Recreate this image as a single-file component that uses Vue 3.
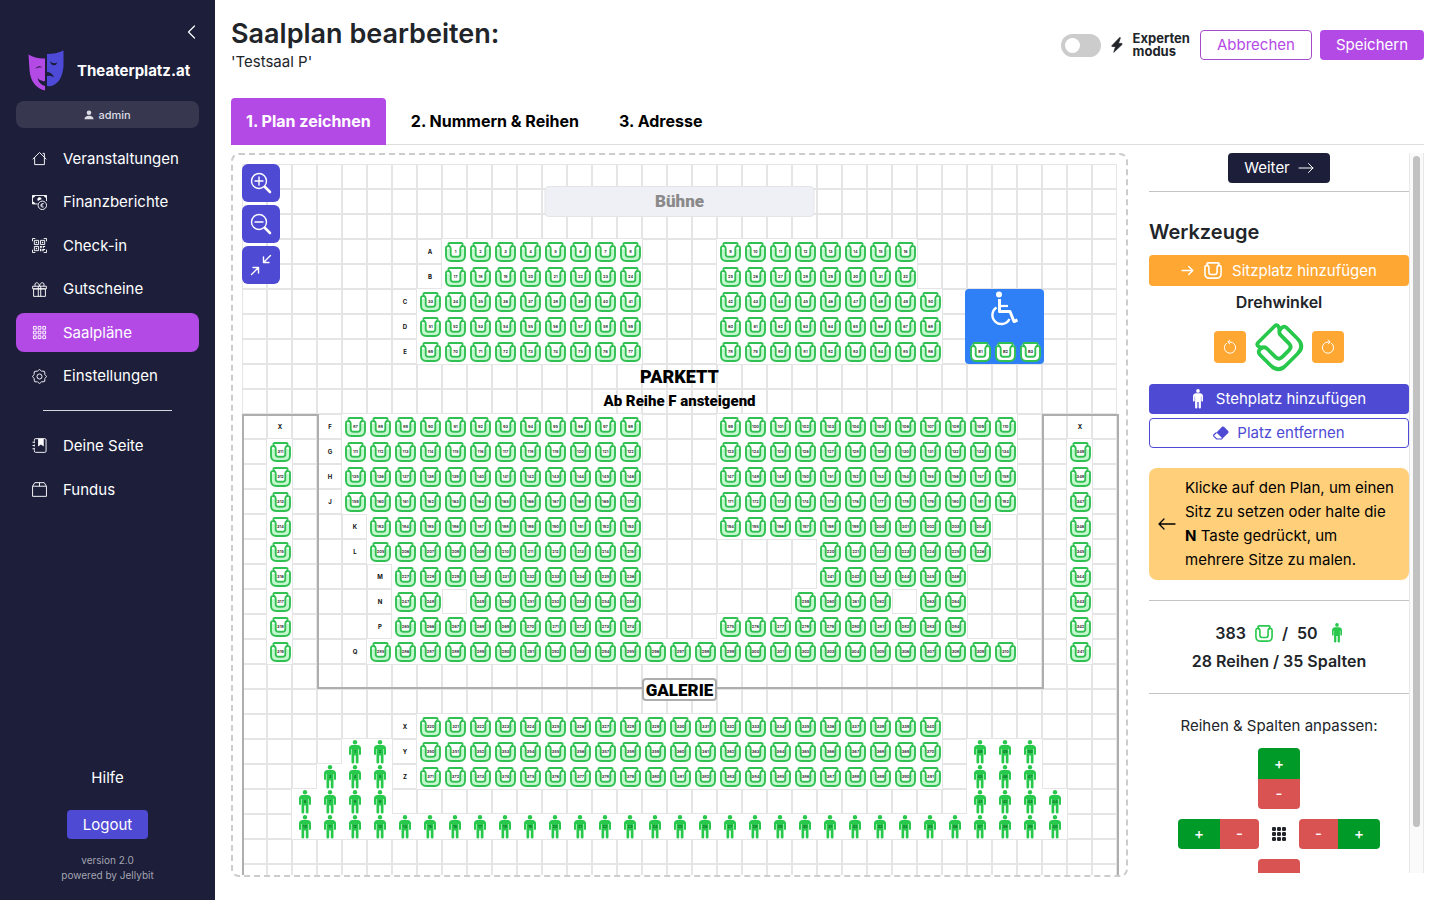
<script setup>
import { ref } from 'vue'

const expert = ref(false)
const tab = ref(0)
const tabs = ['1. Plan zeichnen', '2. Nummern & Reihen', '3. Adresse']

const mainNav = [
  { label: 'Veranstaltungen', icon: 'house' },
  { label: 'Finanzberichte', icon: 'cash' },
  { label: 'Check-in', icon: 'qr' },
  { label: 'Gutscheine', icon: 'gift' },
  { label: 'Saalpläne', icon: 'grid', active: true },
  { label: 'Einstellungen', icon: 'gear' },
]
const extraNav = [
  { label: 'Deine Seite', icon: 'journal' },
  { label: 'Fundus', icon: 'box' },
]

const CELL = 25
const COLS = 35
const ROWS = 29

// [row, first column, count, first number]
const seatRuns = [
  [3, 8, 8, 1], [3, 19, 8, 9],
  [4, 8, 8, 17], [4, 19, 8, 25],
  [5, 7, 9, 33], [5, 19, 9, 42],
  [6, 7, 9, 51], [6, 19, 9, 60],
  [7, 7, 9, 69], [7, 19, 9, 78],
  [10, 4, 12, 87], [10, 19, 12, 99],
  [11, 4, 12, 111], [11, 19, 12, 123],
  [12, 4, 12, 135], [12, 19, 12, 147],
  [13, 4, 12, 159], [13, 19, 12, 171],
  [14, 5, 11, 183], [14, 19, 11, 194],
  [15, 5, 11, 205], [15, 23, 7, 220],
  [16, 6, 10, 227], [16, 23, 6, 241],
  [17, 6, 2, 247], [17, 9, 7, 249], [17, 22, 4, 259], [17, 27, 2, 263],
  [18, 6, 10, 265], [18, 19, 10, 275],
  [19, 5, 26, 285],
  [22, 7, 21, 320],
  [23, 7, 21, 350],
  [24, 7, 21, 371],
]
const standRuns = [
  [23, 4, 2, 1], [24, 3, 3, 3], [25, 2, 4, 6], [26, 2, 31, 10],
  [25, 29, 4, 41], [24, 29, 3, 45], [23, 29, 3, 48],
]
const expand = (runs) =>
  runs.flatMap(([row, col, count, first]) =>
    Array.from({ length: count }, (_, i) => ({ row, col: col + i, n: String(first + i) })))

const seats = expand(seatRuns)
for (let i = 0; i < 9; i++) {
  seats.push({ row: 11 + i, col: 1, n: String(311 + i) })
  seats.push({ row: 11 + i, col: 33, n: String(349 - i) })
}
const wheelSeats = ['B1', 'B2', 'B3'].map((n, i) => ({ row: 7, col: 29 + i, n }))
const stands = expand(standRuns)

const rowLabels = [
  [3, 7, 'A'], [4, 7, 'B'], [5, 6, 'C'], [6, 6, 'D'], [7, 6, 'E'],
  [10, 3, 'F'], [11, 3, 'G'], [12, 3, 'H'], [13, 3, 'J'],
  [14, 4, 'K'], [15, 4, 'L'], [16, 5, 'M'], [17, 5, 'N'], [18, 5, 'P'], [19, 4, 'Q'],
  [22, 6, 'X'], [23, 6, 'Y'], [24, 6, 'Z'], [10, 1, 'X'], [10, 33, 'X'],
]

const taken = new Set([...seats, ...stands].map((s) => s.row + '-' + s.col))
const cells = []
for (let r = 0; r < ROWS; r++)
  for (let c = 0; c < COLS; c++)
    if (!taken.has(r + '-' + c)) cells.push({ r, c })
</script>

<template>
  <svg class="defs" aria-hidden="true">
    <symbol id="seat" viewBox="0 0 21 20">
      <g fill="none" stroke="currentColor" stroke-width="1.9" stroke-linejoin="round" stroke-linecap="round">
        <path d="M4.200 4.200 3.500 2.800Q3.100 1 4.900 1H16.100Q17.900 1 17.500 2.800L16.800 4.200" />
        <path d="M4.200 4.200Q1 3.600 1 6.200V13.500Q1 19 6.500 19H14.500Q20 19 20 13.500V6.200Q20 3.600 16.800 4.200" />
        <path d="M4.200 4.200Q5.700 4.800 5.700 6.600V12.200Q5.700 14.700 8.200 14.700H12.800Q15.300 14.700 15.300 12.200V6.600Q15.300 4.800 16.800 4.200" />
      </g>
    </symbol>
    <symbol id="person" viewBox="0 0 12 24">
      <circle cx="6" cy="2.3" r="2.2" />
      <path d="M3 5H9Q12 5.500 12 8.500V14Q12 15 11 15Q10 15 10 14V9H9.500V22.500Q9.500 23.500 8.300 23.500Q6.800 23.500 6.800 22.500V15.500H5.200V22.500Q5.200 23.500 3.700 23.500Q2.500 23.500 2.500 22.500V9H2V14Q2 15 1 15Q0 15 0 14V8.500Q0 5.500 3 5Z" />
    </symbol>
    <symbol id="house" viewBox="0 0 16 16">
      <path d="M1 8.500 8 1.600 15 8.500M2.800 7V14.500H13.200V7M11.800 2.500H13.200V6" fill="none" stroke="currentColor" stroke-linejoin="round" stroke-linecap="round" />
    </symbol>
    <symbol id="cash" viewBox="0 0 16 16">
      <path d="M6 9.500H.5V.5H15.500V6.500" fill="none" stroke="currentColor" />
      <path d="M.5.500H3.500Q3 3 .5 3.300ZM15.500.500H12.500Q13 3 15.500 3.300ZM.5 9.500V6.800Q3 7 3.300 9.500Z" fill="currentColor" />
      <path d="M10.300 4.600A2.300 2.300 0 1 0 6.500 6.500L8 5.400Z" fill="currentColor" />
      <circle cx="11" cy="11" r="4.500" fill="none" stroke="currentColor" />
      <path d="M12.600 9.200Q10 8 9.800 11Q10 14 12.600 12.800M9 10.400H11.500M9 11.700H11.500" fill="none" stroke="currentColor" stroke-width=".8" />
    </symbol>
    <symbol id="qr" viewBox="0 0 16 16">
      <path d="M.5 3.500V.5H3.500M12.500.5H15.500V3.500M15.500 12.500V15.500H12.500M3.500 15.500H.5V12.500M2.500 2.500H7V7H2.500ZM9 2.500H13.500V7H9ZM2.500 9H7V13.500H2.500Z" fill="none" stroke="currentColor" />
      <path d="M4 4H5.500V5.500H4ZM10.500 4H12V5.500H10.500ZM4 10.500H5.500V12H4ZM8.500 8.500H10.500V10.500H8.500ZM11.500 8.500H14V9.500H12.500V11H11.500ZM8.500 11.500H10V14H8.500ZM11 11.800H14V12.800H12.500V14H11Z" fill="currentColor" />
    </symbol>
    <symbol id="gift" viewBox="0 0 16 16">
      <path d="M.7 4.500H15.300V7.300H.7ZM1.700 7.300H14.300V15.300H1.700ZM6.700 4.500V15.300M9.300 4.500V15.300M8 4.500C7.500 2 6.500.800 5 .8C3 .8 2.800 3 3.500 4.500M8 4.500C8.500 2 9.500.800 11 .8C13 .8 13.200 3 12.500 4.500" fill="none" stroke="currentColor" />
    </symbol>
    <symbol id="grid" viewBox="0 0 16 16">
      <path d="M1.500 1.500H4.500V4.500H1.500ZM6.500 1.500H9.500V4.500H6.500ZM11.500 1.500H14.500V4.500H11.500ZM1.500 6.500H4.500V9.500H1.500ZM6.500 6.500H9.500V9.500H6.500ZM11.500 6.500H14.500V9.500H11.500ZM1.500 11.500H4.500V14.500H1.500ZM6.500 11.500H9.500V14.500H6.500ZM11.500 11.500H14.500V14.500H11.500Z" fill="none" stroke="currentColor" />
    </symbol>
    <symbol id="gear" viewBox="0 0 16 16">
      <circle cx="8" cy="8" r="2.700" fill="none" stroke="currentColor" />
      <path d="M6.600 1.600Q8-.4 9.400 1.600Q10 2.900 11.300 2.300Q13.700 1.600 13.700 4.200Q13.200 6 14.400 6.600Q16.400 8 14.400 9.400Q13.100 10 13.700 11.300Q14.400 13.700 11.800 13.700Q10 13.200 9.400 14.400Q8 16.400 6.600 14.400Q6 13.100 4.700 13.700Q2.300 14.400 2.300 11.800Q2.800 10 1.600 9.400Q-.4 8 1.600 6.600Q2.900 6 2.300 4.700Q1.600 2.300 4.200 2.300Q6 2.800 6.600 1.600Z" fill="none" stroke="currentColor" />
    </symbol>
    <symbol id="journal" viewBox="0 0 16 16">
      <path d="M2.500 3V2Q2.500.7 3.800.7H13.700Q15 .7 15 2V14Q15 15.300 13.700 15.300H3.800Q2.500 15.300 2.500 14V13M.5 4.500H2.500M.5 8H2.500M.5 11.500H2.500M2.500 3.500V5.500M2.500 7V9M2.500 10.500V12.500" fill="none" stroke="currentColor" />
      <path d="M6.500.7H12.500V9L9.500 7 6.500 9Z" fill="currentColor" />
    </symbol>
    <symbol id="box" viewBox="0 0 16 16">
      <path d="M.6 4.500 3 .7H13L15.400 4.500V15.300H.6ZM.6 4.500H15.400M8 .7V4.500" fill="none" stroke="currentColor" />
    </symbol>
    <symbol id="arrow" viewBox="0 0 16 16">
      <path d="M1 8H15M10.500 3.500 15 8 10.500 12.500" fill="none" stroke="currentColor" stroke-linecap="round" stroke-linejoin="round" />
    </symbol>
  </svg>

  <div class="app">
    <aside class="sidebar">
      <button class="collapse" aria-label="Menü einklappen">
        <svg width="16" height="16" viewBox="0 0 16 16"><path d="M11.500 2 5.500 8 11.500 14" fill="none" stroke="currentColor" stroke-width="1.200" stroke-linecap="round" stroke-linejoin="round" /></svg>
      </button>
      <a class="brand" href="#">
        <svg width="36" height="41" viewBox="0 0 36 41" aria-hidden="true">
          <path d="M.5 4.500Q8 9 17 8.500V40.500Q3 37 1.500 20Z" fill="#b44ae6" />
          <path d="M19 4Q28 4 35.500.5V16Q34 34 22 36.200L19 36Z" fill="#4e4ad8" />
          <path d="M7 19Q10 14.500 14.500 17.500Q10 16.500 7 19ZM9.500 28Q13 32 17 31V36Q11 34.500 9.500 28ZM22 11Q25 14.500 29.500 12.500Q28 16 24.500 15Q22.500 14 22 11ZM19 22Q24 22 26 27.500Q23 24.800 19 26Z" fill="#1c1e3a" />
        </svg>
        <span>Theaterplatz.at</span>
      </a>
      <button class="user">
        <svg width="10" height="10" viewBox="0 0 10 10" aria-hidden="true"><circle cx="5" cy="2.800" r="2.300" fill="currentColor" /><path d="M.5 9.300Q.5 5.800 5 5.800T9.500 9.300Z" fill="currentColor" /></svg>
        admin
      </button>
      <nav class="nav main-nav">
        <a v-for="item in mainNav" :key="item.label" href="#" :class="{ active: item.active }">
          <svg width="15" height="15" aria-hidden="true"><use :href="'#' + item.icon" /></svg>{{ item.label }}
        </a>
      </nav>
      <hr />
      <nav class="nav">
        <a v-for="item in extraNav" :key="item.label" href="#">
          <svg width="15" height="15" aria-hidden="true"><use :href="'#' + item.icon" /></svg>{{ item.label }}
        </a>
      </nav>
      <div class="foot">
        <a href="#" class="help">Hilfe</a>
        <button class="btn indigo">Logout</button>
        <p>version 2.0<br />powered by Jellybit</p>
      </div>
    </aside>

    <main>
      <header>
        <div>
          <h1>Saalplan bearbeiten:</h1>
          <p>'Testsaal P'</p>
        </div>
        <div class="actions">
          <label class="expert">
            <input v-model="expert" type="checkbox" role="switch" />
            <svg width="12" height="16" viewBox="0 0 12 16" aria-hidden="true"><path d="M8.800.5 1 8.600Q.4 9.400 1.300 9.500H4.600L2.800 15.300 11 7.500Q11.500 6.500 10.600 6.400H7.400L9.300 1Q9.200.3 8.800.5Z" fill="currentColor" stroke="currentColor" stroke-width=".8" /></svg>
            <span>Experten<br />modus</span>
          </label>
          <button class="btn outline-purple">Abbrechen</button>
          <button class="btn purple">Speichern</button>
        </div>
      </header>

      <div class="tabs" role="tablist">
        <button v-for="(t, i) in tabs" :key="t" role="tab" :aria-selected="tab === i" @click="tab = i">{{ t }}</button>
      </div>

      <div class="work">
        <section class="plan">
          <div class="zoom">
            <button aria-label="Vergrößern"><svg width="22" height="22" viewBox="0 0 22 22"><g fill="none" stroke="currentColor" stroke-linecap="round"><circle cx="9" cy="9" r="7.500" stroke-width="1.400" /><path d="M9 5V13M5 9H13" stroke-width="1.400" /><path d="M15 15 20 20" stroke-width="2.600" /></g></svg></button>
            <button aria-label="Verkleinern"><svg width="22" height="22" viewBox="0 0 22 22"><g fill="none" stroke="currentColor" stroke-linecap="round"><circle cx="9" cy="9" r="7.500" stroke-width="1.400" /><path d="M5 9H13" stroke-width="1.400" /><path d="M15 15 20 20" stroke-width="2.600" /></g></svg></button>
            <button aria-label="Einpassen"><svg width="22" height="22" viewBox="0 0 22 22"><path d="M20.500 1.500 13.500 8.500M13.500 3V8.500H19M1.500 20.500 8.500 13.500M3 13.500H8.500V19" fill="none" stroke="currentColor" stroke-width="1.400" stroke-linecap="round" stroke-linejoin="round" /></svg></button>
          </div>
          <div class="canvas">
            <svg width="877" height="725" viewBox="0 0 877 725">
              <g class="cells">
                <rect v-for="k in cells" :key="k.r + '-' + k.c" :x="k.c * CELL + 0.5" :y="k.r * CELL + 0.5" width="24" height="24" />
              </g>
              <g class="walls">
                <path d="M1 725V251H76V524H801V251H876V725" />
              </g>
              <g class="labels">
                <text v-for="l in rowLabels" :key="l[0] + '-' + l[1]" :x="l[1] * CELL + 13" :y="l[0] * CELL + 15">{{ l[2] }}</text>
              </g>
              <rect x="723" y="125" width="79" height="75" rx="4" fill="#2f80f7" />
              <g fill="none" stroke="#fff" stroke-width="3" stroke-linejoin="round">
                <circle cx="757" cy="130.500" r="3" fill="#fff" stroke="none" />
                <path d="M757.500 135V147.500H768L772 157.500 775.500 156" />
                <path d="M758 142H766" stroke-width="2.200" />
                <path d="M754.500 143.500A9 9 0 1 0 767.500 155" stroke-width="2.400" />
              </g>
              <g v-for="s in wheelSeats" :key="s.n" class="seat">
                <rect :x="s.col * CELL + 4" :y="s.row * CELL + 4" width="19" height="18" rx="5" fill="#fff" />
                <use href="#seat" :x="s.col * CELL + 3" :y="s.row * CELL + 3" width="21" height="20" />
                <text :x="s.col * CELL + 13.5" :y="s.row * CELL + 14">{{ s.n }}</text>
              </g>
              <g v-for="s in seats" :key="s.n" class="seat">
                <path :transform="`translate(${s.col * CELL + 3} ${s.row * CELL + 3})`" class="glow" d="M3.300 7V13Q3.300 17 7 17H14Q17.700 17 17.700 13V7" />
                <use href="#seat" :x="s.col * CELL + 3" :y="s.row * CELL + 3" width="21" height="20" />
                <text :x="s.col * CELL + 13.5" :y="s.row * CELL + 14">{{ s.n }}</text>
              </g>
              <g v-for="s in stands" :key="'p' + s.n" class="stand">
                <use href="#person" :x="s.col * CELL + 7" :y="s.row * CELL + 1" width="12" height="24" />
                <text :x="s.col * CELL + 13" :y="s.row * CELL + 14">{{ s.n }}</text>
              </g>
              <rect x="303" y="22.500" width="269" height="30" rx="4" fill="#eff0f5" stroke="#e5e5e8" />
              <g class="titles">
                <text x="437.500" y="43" font-size="17" fill="#8a8a8a">Bühne</text>
                <text x="437.500" y="219" font-size="18">PARKETT</text>
                <text x="437.500" y="242" font-size="15">Ab Reihe F ansteigend</text>
                <rect x="401" y="515" width="73" height="21" rx="3" fill="#fff" stroke="#aeaeae" stroke-width="2" />
                <text x="437.500" y="532" font-size="17">GALERIE</text>
              </g>
            </svg>
          </div>
        </section>

        <aside class="tools">
          <div class="tools-body">
            <button class="btn dark next">Weiter <svg width="16" height="16" aria-hidden="true"><use href="#arrow" /></svg></button>
            <hr class="first" />
            <h2>Werkzeuge</h2>
            <button class="btn orange wide seat-add">
              <svg width="13" height="13" viewBox="0 0 16 16" aria-hidden="true"><path d="M1.500 8H14.500M9.500 3 14.500 8 9.500 13" fill="none" stroke="currentColor" stroke-width="1.800" stroke-linecap="round" stroke-linejoin="round" /></svg>
              <svg width="18" height="17" aria-hidden="true"><use href="#seat" /></svg>
              Sitzplatz hinzufügen
            </button>
            <div class="angle-title">Drehwinkel</div>
            <div class="angle">
              <button class="btn orange" aria-label="Nach links drehen"><svg width="16" height="16" viewBox="0 0 16 16"><path d="M4.800 4A5.600 5.600 0 1 0 8 3H6M8 .8 5.800 3 8 5.200" fill="none" stroke="currentColor" /></svg></button>
              <svg class="turned" width="42" height="40" aria-hidden="true"><use href="#seat" /></svg>
              <button class="btn orange" aria-label="Nach rechts drehen"><svg width="16" height="16" viewBox="0 0 16 16"><path d="M11.200 4A5.600 5.600 0 1 1 8 3H10M8 .8 10.200 3 8 5.200" fill="none" stroke="currentColor" /></svg></button>
            </div>
            <button class="btn indigo wide stand-add"><svg width="12" height="20" aria-hidden="true" fill="currentColor"><use href="#person" /></svg>Stehplatz hinzufügen</button>
            <button class="btn outline-indigo wide remove"><svg width="16" height="14" viewBox="0 0 16 14" aria-hidden="true"><path d="M9 .8Q10 0 11 .8L15.200 5Q16 6 15.200 7L9.500 12.500 3.500 6.500Z" fill="currentColor" /><path d="M3.500 6.500 1 8.700Q.3 9.500 1 10.300L3.700 13H8.500L9.500 12.200" fill="none" stroke="currentColor" stroke-width="1.200" /></svg>Platz entfernen</button>
            <div class="hint">
              <svg width="20" height="20" viewBox="0 0 20 20" aria-hidden="true"><path d="M18 10H2M7 5 2 10 7 15" fill="none" stroke="currentColor" stroke-width="1.300" stroke-linecap="round" stroke-linejoin="round" /></svg>
              <p>Klicke auf den Plan, um einen Sitz zu setzen oder halte die <b>N</b> Taste gedrückt, um mehrere Sitze zu malen.</p>
            </div>
            <hr />
            <div class="stats">
              <div>383 <svg class="green" width="18" height="17" aria-hidden="true"><use href="#seat" /></svg> / <span>50</span> <svg class="green" width="12" height="20" fill="currentColor" aria-hidden="true"><use href="#person" /></svg></div>
              <div>28 Reihen / 35 Spalten</div>
            </div>
            <hr />
            <div class="adjust">
              <p>Reihen &amp; Spalten anpassen:</p>
              <div class="pair column"><button class="plus">+</button><button class="minus">-</button></div>
              <div class="middle">
                <div class="pair"><button class="plus">+</button><button class="minus">-</button></div>
                <svg width="16" height="16" viewBox="0 0 16 16" aria-hidden="true"><g fill="currentColor"><rect v-for="i in 9" :key="i" :x="1 + ((i - 1) % 3) * 5" :y="1 + Math.floor((i - 1) / 3) * 5" width="4" height="4" rx="1.300" /></g></svg>
                <div class="pair"><button class="minus">-</button><button class="plus">+</button></div>
              </div>
              <div class="pair column"><button class="minus">-</button><button class="plus">+</button></div>
            </div>
          </div>
          <div class="track"><div class="thumb"></div></div>
        </aside>
      </div>
    </main>
  </div>
</template>

<style>
body { background: #fff; }
</style>

<style scoped>
* { box-sizing: border-box; }
.defs { position: absolute; width: 0; height: 0; }
.app { display: flex; height: 100vh; font: 16px/24px Inter, "Liberation Sans", sans-serif; color: #212529; overflow: hidden; }
button { font: inherit; color: inherit; border: 0; background: none; padding: 0; cursor: pointer; }
a { color: inherit; text-decoration: none; }
p, h1, h2 { margin: 0; }
svg { flex: none; }

.sidebar { width: 215px; flex: none; background: #1c1e3a; color: #fff; padding: 24px 16px 17px; display: flex; flex-direction: column; font-weight: 400; font-size: 15px; }
.collapse { align-self: flex-end; height: 16px; display: flex; }
.brand { display: flex; align-items: center; gap: 13px; padding-left: 12px; margin: 10px 0; font-weight: 700; white-space: nowrap; }
.user { height: 27px; flex: none; border-radius: 8px; background: #373850; color: #dcdce3; font-size: 11px; font-weight: 500; display: flex; align-items: center; justify-content: center; gap: 4px; margin-bottom: 11px; }
.nav { display: flex; flex-direction: column; gap: 5px; }
.main-nav { height: 257px; justify-content: space-between; gap: 0; }
.nav a { height: 39px; display: flex; align-items: center; gap: 16px; padding-left: 16px; border-radius: 8px; }
.nav a.active { background: #b44ae6; }
.sidebar hr { width: 129px; margin: 14px auto 15px; border: 0; border-top: 1px solid #d5d5dc; }
.foot { margin-top: auto; display: flex; flex-direction: column; align-items: center; text-align: center; }
.foot .btn { margin: 20px 0 14px; padding: 0 16px; height: 29px; }
.foot p { font-size: 10px; line-height: 15px; color: #a4a5b1; }

.btn { height: 30px; border-radius: 4px; display: inline-flex; align-items: center; justify-content: center; color: #fff; white-space: nowrap; font-size: 15px; }
.indigo { background: #4e4ad4; }
.purple { background: #b44ae6; }
.dark { background: #1c1e3a; }
.orange { background: #ffa733; }
.outline-purple { color: #b44ae6; border: 1px solid #a54bc9; }
.outline-indigo { color: #4e4ad4; border: 1px solid #4e4ad4; }

main { flex: 1; min-width: 0; padding: 18px 16px 23px; display: flex; flex-direction: column; }
header { height: 80px; flex: none; display: flex; justify-content: space-between; }
h1 { font-size: 27px; line-height: 32px; font-weight: 600; }
header p { font-size: 15px; }
.actions { display: flex; align-items: center; gap: 8px; height: 54px; }
.actions .btn { padding: 0 16px; }
.expert { display: flex; align-items: center; gap: 10px; font-size: 13px; line-height: 13px; font-weight: 700; margin-right: 2px; }
.expert input { appearance: none; width: 40px; height: 23px; margin: 0; border-radius: 12px; background: #ccc; padding: 4px; display: flex; }
.expert input::before { content: ""; width: 15px; height: 15px; border-radius: 50%; background: #fff; }
.expert input:checked { background: #b44ae6; justify-content: flex-end; }

.tabs { display: flex; gap: 10px; height: 47px; flex: none; border-bottom: 1px solid #dedede; }
.tabs button { padding: 0 15px 2px; height: 47px; font-weight: 700; font-size: 16px; color: #000; border-radius: 4px 4px 0 0; }
.tabs button[aria-selected="true"] { background: #b44ae6; color: #fff; }

.work { flex: 1; min-height: 0; margin-top: 8px; display: flex; gap: 21px; }
.plan { flex: 1; min-width: 0; border: 2px dashed #ccc; border-radius: 8px; padding: 9px 7px 0 9px; position: relative; }
.canvas { height: 100%; overflow: hidden; }
.canvas svg { display: block; }
.zoom { position: absolute; left: 9px; top: 9px; display: grid; gap: 3px; }
.zoom button { width: 38px; height: 38px; border-radius: 6px; background: #4e4ad4; color: #fff; display: grid; place-items: center; }
.cells rect { fill: #fff; stroke: #e5e5e5; }
.walls path { fill: none; stroke: #aeaeae; stroke-width: 2; }
.labels text { font-size: 6px; font-weight: 700; text-anchor: middle; fill: #111; }
.seat { color: #30c152; }
.seat text, .stand text { font-size: 4px; font-weight: 600; text-anchor: middle; fill: #222; }
.stand text { fill: #0b6b24; }
.glow { fill: none; stroke: #c3f7cd; stroke-width: 3; }
.stand { fill: #28c84c; }
.titles text { font-family: Roboto, "Liberation Sans", sans-serif; font-weight: 900; text-anchor: middle; }

.tools { width: 275px; flex: none; margin-bottom: 4px; display: flex; overflow: hidden; }
.tools-body { flex: 1; min-width: 0; display: flex; flex-direction: column; }
.tools-body > * { flex: none; }
.tools hr { width: 100%; margin: 20px 0; border: 0; border-top: 1px solid #c4c4c4; }
.tools hr.first { margin: 8px 0 28px; }
.track { width: 15px; border: 1px solid #e8e8e8; border-width: 0 1px; background: #fafafa; padding: 3px; }
.thumb { height: 94%; border-radius: 4px; background: #c1c1c1; }
.next { align-self: center; padding: 0 16px; gap: 8px; }
h2 { font-size: 20px; line-height: 24px; font-weight: 600; margin-bottom: 11px; }
.wide { width: 100%; }
.seat-add { height: 31px; gap: 10px; }
.angle-title { font-weight: 600; text-align: center; line-height: 33px; }
.angle { display: flex; justify-content: center; align-items: center; gap: 12px; height: 55px; margin-bottom: 10px; }
.angle .btn { width: 32px; height: 32px; }
.turned { color: #28c84c; transform: rotate(-45deg); }
.stand-add { gap: 12px; margin-bottom: 4px; }
.remove { gap: 8px; }
.hint { margin-top: 20px; background: #ffcf7a; border-radius: 8px; padding: 8px 12px 8px 8px; display: flex; gap: 8px; align-items: center; color: #000; font-size: 15px; }
.stats { text-align: center; font-weight: 600; line-height: 28px; margin: -2px 0; }
.stats div:first-child { display: flex; justify-content: center; align-items: center; gap: 9px; }
.stats span { margin-right: 4px; }
.green { color: #28c84c; }
.adjust { display: flex; flex-direction: column; align-items: center; gap: 10px; font-size: 15px; }
.pair { display: flex; border-radius: 4px; overflow: hidden; }
.pair button { height: 30px; color: #fff; font-weight: 500; }
.plus { width: 42px; background: #009a29; }
.minus { width: 39px; background: #da5353; }
.column { flex-direction: column; }
.column button { width: 42px; }
.column .plus { height: 31px; }
.middle { display: flex; align-items: center; gap: 12px; }
</style>
